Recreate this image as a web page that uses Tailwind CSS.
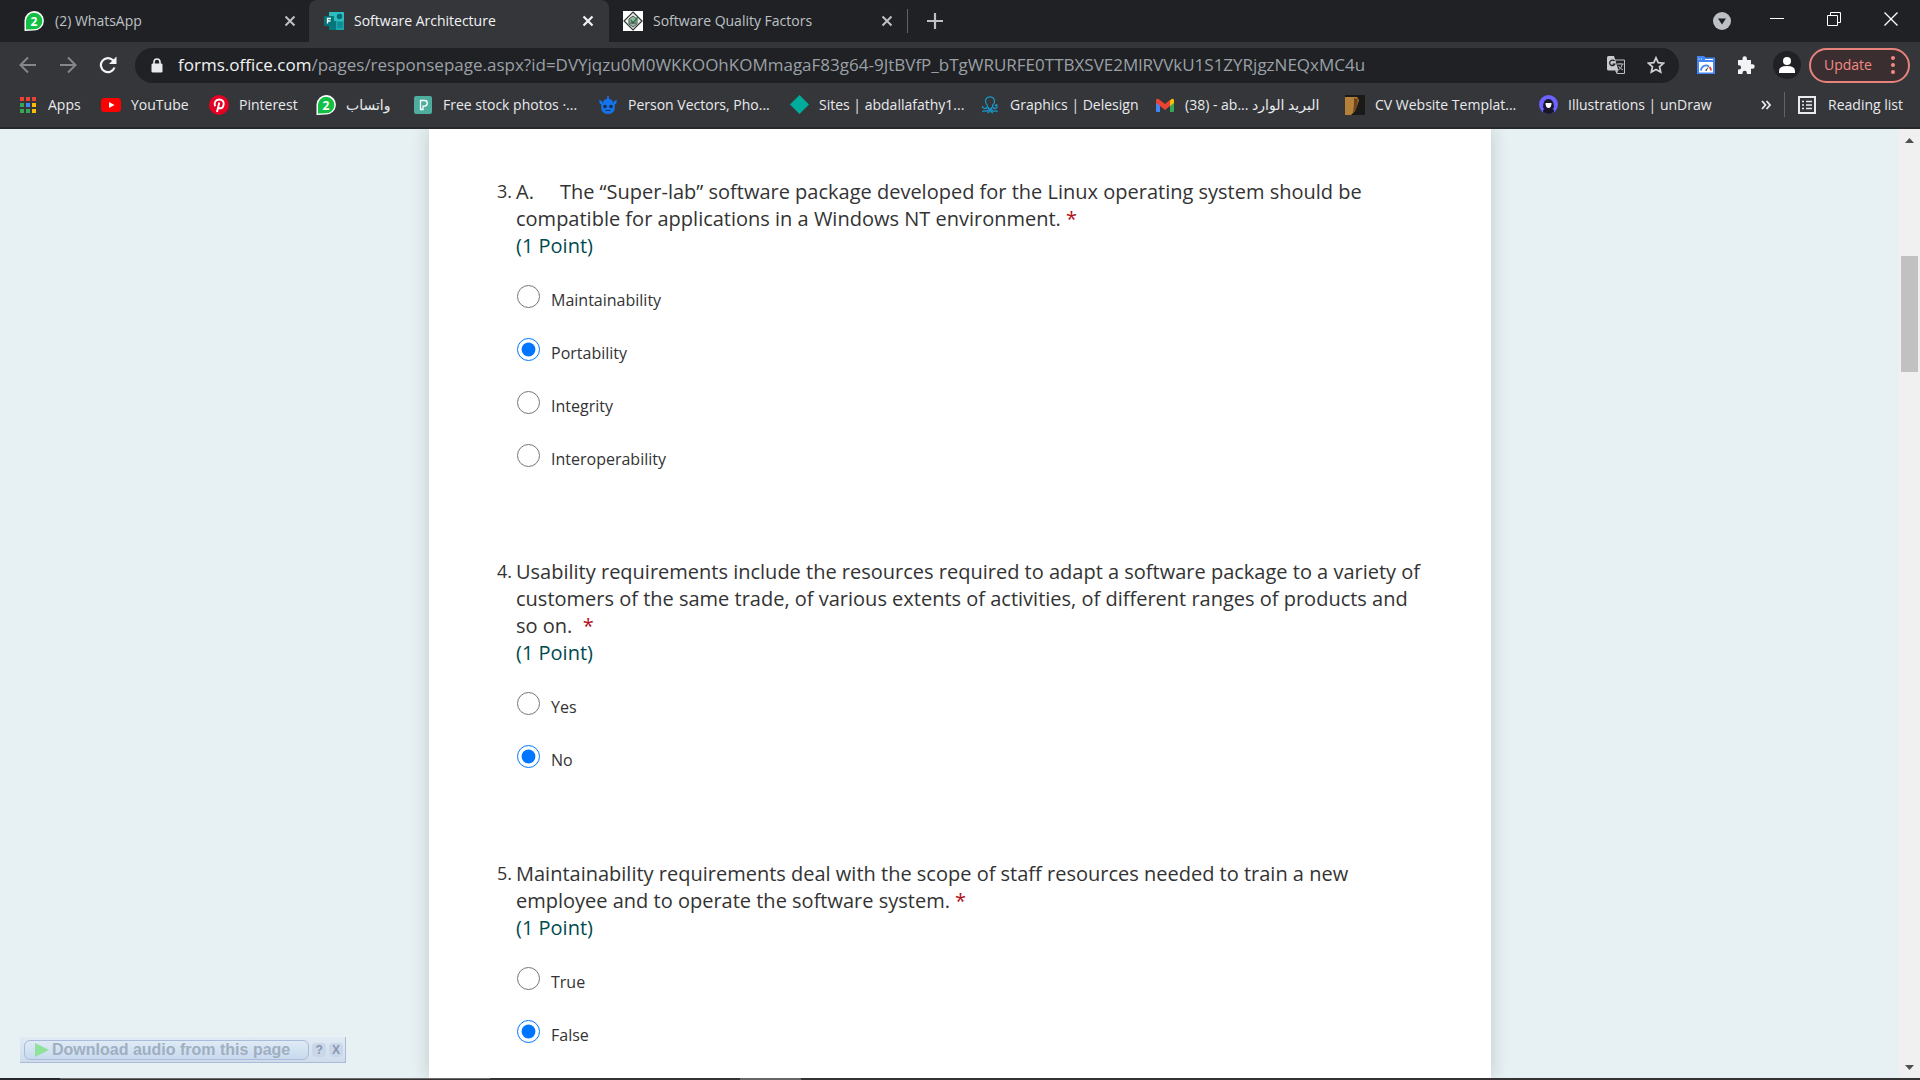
<!DOCTYPE html>
<html lang="en">
<head>
<meta charset="utf-8">
<title>Software Architecture</title>
<script src="https://cdn.jsdelivr.net/npm/@tailwindcss/browser@4"></script>
</head>
<body class="h-screen flex flex-col overflow-hidden bg-[#e7f0f3] font-['Open_Sans','DejaVu_Sans',sans-serif] text-sm text-[#e8eaed]">

<!-- Tab strip -->
<header class="shrink-0 bg-[#35363a]">
  <div class="flex h-[42px] items-stretch bg-[#202124]">
    <div class="flex w-[309px] items-center rounded-br-lg pl-6 pr-[13px] text-[#bdc1c6]">
      <svg class="size-5 shrink-0" viewBox="0 0 20 20"><path d="M.5 20V9.500A9.700 9.700 0 1 1 10 19.500Z" fill="#fff"/><path d="M2 18.500V10A8.200 8.200 0 1 1 10 18.200Z" fill="#12c143"/><text x="10" y="14.500" text-anchor="middle" font-size="12" font-weight="700" fill="#fff">2</text></svg>
      <span class="ml-[11px] flex-1 whitespace-nowrap">(2) WhatsApp</span>
      <button aria-label="Close tab" class="size-3"><svg viewBox="0 0 12 12" class="size-3" stroke="currentColor" stroke-width="2"><path d="M1.500 1.500l9 9M10.500 1.500l-9 9"/></svg></button>
    </div>
    <div class="flex w-[300px] items-center rounded-t-lg bg-[#35363a] pl-[15px] pr-[15px] text-[#f1f3f4]">
      <svg class="size-5 shrink-0" viewBox="0 0 20 20"><rect x="5" y="1" width="15" height="9" fill="#2bbcc0"/><rect x="5" y="10" width="8" height="9" fill="#06777c"/><rect x="12" y="10" width="8" height="9" fill="#1ba5a9"/><rect x="13.500" y="11" width="5" height="6" fill="#0c8e92"/><circle cx="15.500" cy="5.500" r="2.700" fill="#036c70"/><rect x="0" y="5" width="10" height="10" rx="1" fill="#037478"/><path d="M3.500 12.500v-5h3.500M3.500 10h3" stroke="#fff" stroke-width="1.300" fill="none"/></svg>
      <span class="ml-[10px] flex-1 whitespace-nowrap">Software Architecture</span>
      <button aria-label="Close tab" class="size-3"><svg viewBox="0 0 12 12" class="size-3" stroke="currentColor" stroke-width="2.200"><path d="M1.500 1.500l9 9M10.500 1.500l-9 9"/></svg></button>
    </div>
    <div class="flex w-[298px] items-center pl-[14px] pr-[14px] text-[#bdc1c6]">
      <svg class="size-5 shrink-0" viewBox="0 0 20 20"><rect width="20" height="20" fill="#fff"/><path d="M10 1l9 9-9 9-9-9z" fill="#e8ece8" stroke="#333" stroke-width="1.200"/><path d="M6 8l4-3 4 3v5l-4 3-4-3z" fill="#9db5a4" stroke="#3d5a48"/><path d="M8 9l2 3 5-6" stroke="#277a45" stroke-width="1.500" fill="none"/><path d="M7 12h6" stroke="#444"/></svg>
      <span class="ml-[10px] flex-1 whitespace-nowrap">Software Quality Factors</span>
      <button aria-label="Close tab" class="size-3"><svg viewBox="0 0 12 12" class="size-3" stroke="currentColor" stroke-width="2"><path d="M1.500 1.500l9 9M10.500 1.500l-9 9"/></svg></button>
    </div>
    <div class="my-[9px] w-px bg-[#5f6368]"></div>
    <button aria-label="New tab" class="ml-[19px] self-center text-[#bdc1c6]"><svg viewBox="0 0 16 16" class="size-4" stroke="currentColor" stroke-width="2.200"><path d="M8 0v16M0 8h16"/></svg></button>
    <div class="ml-auto flex items-center pr-[22px]">
      <button aria-label="Search tabs" class="mr-[39px]"><svg class="size-[18px]" viewBox="0 0 18 18"><circle cx="9" cy="9" r="9" fill="#bdc1c6"/><path d="M5 6.500h8l-4 6z" fill="#202124"/></svg></button>
      <div class="flex items-center gap-[43px] pb-[5px] text-white">
        <button aria-label="Minimize"><svg class="size-[14px]" viewBox="0 0 14 14" stroke="currentColor"><path d="M0 6.500h14"/></svg></button>
        <button aria-label="Restore"><svg class="size-[14px]" viewBox="0 0 14 14" fill="none" stroke="currentColor"><path d="M.5 3.500h10v10H.5zM3.500 3.500v-3h10v10h-3"/></svg></button>
        <button aria-label="Close"><svg class="size-[14px]" viewBox="0 0 14 14" stroke="currentColor" stroke-width="1.300"><path d="M.5 .5l13 13M13.500 .5l-13 13"/></svg></button>
      </div>
    </div>
  </div>

  <!-- Address bar -->
  <div class="flex h-[46px] items-center pl-[19px] pr-[10px]">
    <button aria-label="Back" class="text-[#85878a]"><svg class="size-[18px]" viewBox="0 0 18 18" fill="none" stroke="currentColor" stroke-width="2"><path d="M17 9H2M9 1.500L1.500 9 9 16.500"/></svg></button>
    <button aria-label="Forward" class="ml-[22px] text-[#85878a]"><svg class="size-[18px]" viewBox="0 0 18 18" fill="none" stroke="currentColor" stroke-width="2"><path d="M1 9h15M9 1.500L16.500 9 9 16.500"/></svg></button>
    <button aria-label="Reload" class="ml-[22px] text-[#f1f3f4]"><svg class="size-[18px]" viewBox="0 0 18 18" fill="none" stroke="currentColor" stroke-width="2.200"><path d="M15.500 11.500A7 7 0 1 1 14 4.300L16 6.500"/><path d="M17.500 .5v7.500H10z" fill="currentColor" stroke="none"/></svg></button>
    <div class="ml-[18px] flex h-[35px] flex-1 items-center rounded-full bg-[#202124] pl-4 pr-[14px]">
      <svg class="h-[15px] w-3 shrink-0" viewBox="0 0 12 15"><rect x=".5" y="5.500" width="11" height="9" rx="1.300" fill="#e8eaed"/><path d="M3 6V4a3 3 0 0 1 6 0v2" stroke="#e8eaed" stroke-width="1.600" fill="none"/></svg>
      <a href="#" class="ml-[15px] flex-1 whitespace-nowrap text-[17px] text-[#9aa0a6]"><span class="text-[#f1f3f4]">forms.office.com</span>/pages/responsepage.aspx?id=DVYjqzu0M0WKKOOhKOMmagaF83g64-9JtBVfP_bTgWRURFE0TTBXSVE2MlRVVkU1S1ZYRjgzNEQxMC4u</a>
      <button aria-label="Translate" class="shrink-0"><svg class="size-[18px]" viewBox="0 0 18 18"><path d="M7 4h10.500v13.500H10z" fill="none" stroke="#bdc1c6"/><path d="M0 1.500Q0 0 1.500 0H7l4.500 14.500H1.500Q0 14.500 0 13z" fill="#c8cbce"/><path d="M7.500 5.200a2.700 2.700 0 1 0 .3 3H5.500" stroke="#202124" stroke-width="1.300" fill="none"/><path d="M10 8h6.500M13 7v1M15.500 8q-1 4-4 6M11.500 10q2 3 4.500 4" stroke="#bdc1c6" fill="none"/><path d="M8 14.500h3.500L9.500 17.500z" fill="#bdc1c6"/></svg></button>
      <button aria-label="Bookmark this page" class="ml-[22px] shrink-0"><svg class="size-[18px]" viewBox="0 0 18 18" fill="none" stroke="#d0d3d6" stroke-width="1.700"><path d="M9 1.800l2.200 4.900 5.300.5-4 3.600 1.200 5.300L9 13.400l-4.700 2.700 1.200-5.300-4-3.600 5.300-.5z"/></svg></button>
    </div>
    <button aria-label="Page speed" class="ml-[18px]"><svg class="size-[18px]" viewBox="0 0 18 18"><path d="M0 0h7l1.500 1.500H18V18H0z" fill="#4285f4"/><path d="M2 6h14v10.500H2z" fill="#fff"/><path d="M4 14.500a5 5 0 0 1 8-4" stroke="#4285f4" stroke-width="1.800" fill="none"/><path d="M12.500 11q1.500 1.500 1.500 3.500" stroke="#e0443a" stroke-width="1.800" fill="none"/><path d="M8 14.500l4-4.500-2.500 5z" fill="#444"/><path d="M1.500 3h1M4 3h1M8 3.500h8" stroke="#fff"/></svg></button>
    <button aria-label="Extensions" class="ml-[22px]"><svg class="size-[18px]" viewBox="0 0 18 18"><path d="M1 4h4.500V2.500a2.200 2.200 0 0 1 4.400 0V4H14v4.300h1.500a2.200 2.200 0 0 1 0 4.400H14V18H9.900v-1a2.200 2.200 0 0 0-4.400 0v1H1v-4.500h1a2.100 2.100 0 0 0 0-4.200H1z" fill="#f1f3f4"/></svg></button>
    <button aria-label="Profile" class="ml-[18px]"><svg class="size-7" viewBox="0 0 28 28"><circle cx="14" cy="14" r="14" fill="#202124"/><circle cx="14" cy="10" r="4" fill="#fff"/><path d="M6 22v-2q0-5 8-5t8 5v2z" fill="#fff"/></svg></button>
    <button class="ml-2 flex h-[35px] w-[101px] items-center rounded-full border-2 border-[#e8837c] bg-[#3b2e31] pl-[13px] pr-[13px] text-[#f28b82]">
      <span class="flex-1 text-left">Update</span>
      <svg class="h-5 w-1" viewBox="0 0 4 20" fill="currentColor"><circle cx="2" cy="3" r="2"/><circle cx="2" cy="10" r="2"/><circle cx="2" cy="17" r="2"/></svg>
    </button>
  </div>

  <!-- Bookmarks -->
  <nav class="flex h-[41px] items-center whitespace-nowrap border-b-2 border-[#27282b] pb-[6px] pl-[19px] pr-[17px]">
    <a href="#" class="flex w-[82px] shrink-0 items-center gap-[11px]"><svg class="size-[18px] shrink-0" viewBox="0 0 18 18"><path d="M1 1h4v4H1zM7 1h4v4H7zM13 1h4v4h-4z" fill="#ea4335"/><path d="M1 7h4v4H1zM1 13h4v4H1zM7 13h4v4H7z" fill="#34a853"/><path d="M7 7h4v4H7z" fill="#4285f4"/><path d="M13 7h4v4h-4zM13 13h4v4h-4z" fill="#fbbc05"/></svg>Apps</a>
    <a href="#" class="flex w-[108px] shrink-0 items-center gap-[10px]"><svg class="size-5 shrink-0" viewBox="0 0 20 20"><rect y="3" width="20" height="14" rx="3.500" fill="#f00"/><path d="M8 7l5.500 3L8 13z" fill="#fff"/></svg>YouTube</a>
    <a href="#" class="flex w-[107px] shrink-0 items-center gap-[10px]"><svg class="size-5 shrink-0" viewBox="0 0 20 20"><circle cx="10" cy="10" r="10" fill="#e60023"/><path d="M6.300 11.200C4.500 8 6.500 4.500 10.200 4.500c3 0 4.700 2 4.500 4.300-.2 2.700-1.700 4.500-3.500 4.500-1 0-1.700-.6-1.900-1.200M10.300 7.500L8 17" stroke="#fff" stroke-width="1.900" fill="none"/></svg>Pinterest</a>
    <a href="#" class="flex w-[98px] shrink-0 items-center gap-[10px]"><svg class="size-5 shrink-0" viewBox="0 0 20 20"><path d="M.5 20V9.500A9.700 9.700 0 1 1 10 19.500Z" fill="#fff"/><path d="M2 18.500V10A8.200 8.200 0 1 1 10 18.200Z" fill="#12c143"/><text x="10" y="14.500" text-anchor="middle" font-size="12" font-weight="700" fill="#fff">2</text></svg>واتساب</a>
    <a href="#" class="flex w-[185px] shrink-0 items-center gap-[11px]"><svg class="size-[18px] shrink-0" viewBox="0 0 18 18"><rect width="18" height="18" rx="2" fill="#4dae9e"/><path d="M6.500 13.500v-9h4a2.800 2.800 0 0 1 0 5.600H9v3.400z" fill="none" stroke="#fff" stroke-width="1.300"/></svg>Free stock photos ·...</a>
    <a href="#" class="flex w-[191px] shrink-0 items-center gap-[11px]"><svg class="size-[18px] shrink-0" viewBox="0 0 18 18"><path d="M2 10q0-5 7-5t7 5q0 8-7 8T2 10z" fill="#1273eb"/><path d="M4 6q1-3 5-3.500Q13 3 14 6zM8.200 0h1.600v3.500H8.200zM0 4l3 1v3H1zM18 4l-3 1v3h2z" fill="#1273eb"/><circle cx="6" cy="10.500" r="1.800" fill="#202a44"/><circle cx="12" cy="10.500" r="1.800" fill="#202a44"/><path d="M6.500 14.500h5" stroke="#202a44"/></svg>Person Vectors, Pho...</a>
    <a href="#" class="flex w-[191px] shrink-0 items-center gap-[10px]"><svg class="size-[19px] shrink-0" viewBox="0 0 19 19"><path d="M9.500 0L19 9.500 9.500 19 0 9.500z" fill="#00ac9b"/></svg>Sites | abdallafathy1...</a>
    <a href="#" class="flex w-[175px] shrink-0 items-center gap-[11px]"><svg class="size-[18px] shrink-0" viewBox="0 0 18 18" fill="none" stroke="#1a93c4" stroke-width="1.300"><path d="M6.500 9.500Q4 7 4.500 4.500 5.500 .8 9 .8t4.500 3.700Q14 7 11.500 9.500q0 3 2.500 3 2 0 2-2.500t-2 0M6.500 9.500q0 3-2.500 3-2.500 0-2.500-2.500M7.500 11q.5 5-3 4-2-.5-3 1M10.500 11q-.5 5 3 4 2-.5 3 1M9 12q0 4-2.500 5M9 12q0 4 3 5"/></svg>Graphics | Delesign</a>
    <a href="#" class="flex w-[189px] shrink-0 items-center gap-[11px]"><svg class="size-[18px] shrink-0" viewBox="0 0 18 18"><path d="M0 4h4v12H1q-1 0-1-1z" fill="#4285f4"/><path d="M14 4h4v11q0 1-1 1h-3z" fill="#34a853"/><path d="M14 4.500l1.500-1.500Q18 2 18 4.500V7l-4 3z" fill="#fbbc04"/><path d="M0 7V4.500Q0 2 2.500 3L9 8l5-4v6l-5 4-5-4z" fill="#ea4335"/></svg><span>(38) - ab... البريد الوارد</span></a>
    <a href="#" class="flex w-[194px] shrink-0 items-center gap-[10px]"><svg class="size-5 shrink-0" viewBox="0 0 20 20"><rect width="20" height="20" fill="#1c1a19"/><path d="M0 2h12l2 3-2 6-2 5-4 4H0z" fill="#b5803a"/><path d="M9 3l4 1-1 8-4 6 1-8z" fill="#6b431d"/></svg>CV Website Templat...</a>
    <a href="#" class="flex shrink-0 items-center gap-[10px]"><svg class="size-[19px] shrink-0" viewBox="0 0 19 19"><circle cx="9.500" cy="9.500" r="9.500" fill="#6c63ff"/><path d="M4 13q0-9 5.500-9T15 13z" fill="#17162b"/><path d="M4 17q0-5 5.500-5t5.500 5q-5 4-11 0z" fill="#17162b"/><path d="M6.500 8h6q0 5-3 5t-3-5z" fill="#fff"/></svg>Illustrations | unDraw</a>
    <button aria-label="More bookmarks" class="ml-auto"><svg class="size-[10px]" viewBox="0 0 10 10" fill="none" stroke="currentColor" stroke-width="1.800"><path d="M1 1l3.500 4L1 9M5.500 1L9 5 5.500 9"/></svg></button>
    <div class="ml-[13px] h-[25px] w-px bg-[#5f6368]"></div>
    <button class="ml-[13px] flex items-center gap-3"><svg class="size-[18px]" viewBox="0 0 18 18" fill="none" stroke="#e8eaed" stroke-width="2"><path d="M1 1h16v16H1z"/><path d="M4 5.500h2M4 9h2M4 12.500h2M8 5.500h6M8 9h6M8 12.500h6" stroke-width="1.600"/></svg>Reading list</button>
  </nav>
</header>

<!-- Form page -->
<div class="flex min-h-0 flex-1 text-[#333]">
  <main class="relative min-w-0 flex-1 overflow-hidden pl-[21px]">
    <form class="mx-auto h-full max-w-[1062px] bg-white pl-[68px] pr-[68px] pt-[49px] shadow-[0_0_16px_rgba(60,90,90,0.25)]">
      <fieldset class="mb-[76px]">
        <legend class="flex text-[20px] leading-[27px]"><span class="w-[19px] shrink-0 whitespace-nowrap text-[18px]">3.</span><span>A.<span class="inline-block w-[26px]"></span>The “Super-lab” software package developed for the Linux operating system should be<br>compatible for applications in a Windows NT environment. <span class="text-[#b10e1c]">*</span><br><span class="text-[#004b50]">(1 Point)</span></span></legend>
        <div class="pl-5 pt-[11px] text-[16px]">
          <label class="flex h-[53px] items-center gap-[11px]"><input type="radio" name="q3" class="size-[23px] accent-[#0075ff]"><span class="pt-[7px]">Maintainability</span></label>
          <label class="flex h-[53px] items-center gap-[11px]"><input type="radio" name="q3" checked class="size-[23px] accent-[#0075ff]"><span class="pt-[7px]">Portability</span></label>
          <label class="flex h-[53px] items-center gap-[11px]"><input type="radio" name="q3" class="size-[23px] accent-[#0075ff]"><span class="pt-[7px]">Integrity</span></label>
          <label class="flex h-[53px] items-center gap-[11px]"><input type="radio" name="q3" class="size-[23px] accent-[#0075ff]"><span class="pt-[7px]">Interoperability</span></label>
        </div>
      </fieldset>
      <fieldset class="mb-[77px]">
        <legend class="flex text-[20px] leading-[27px]"><span class="w-[19px] shrink-0 whitespace-nowrap text-[18px]">4.</span><span>Usability requirements include the resources required to adapt a software package to a variety of<br>customers of the same trade, of various extents of activities, of different ranges of products and<br>so on.&nbsp; <span class="text-[#b10e1c]">*</span><br><span class="text-[#004b50]">(1 Point)</span></span></legend>
        <div class="pl-5 pt-[11px] text-[16px]">
          <label class="flex h-[53px] items-center gap-[11px]"><input type="radio" name="q4" class="size-[23px] accent-[#0075ff]"><span class="pt-[7px]">Yes</span></label>
          <label class="flex h-[53px] items-center gap-[11px]"><input type="radio" name="q4" checked class="size-[23px] accent-[#0075ff]"><span class="pt-[7px]">No</span></label>
        </div>
      </fieldset>
      <fieldset>
        <legend class="flex text-[20px] leading-[27px]"><span class="w-[19px] shrink-0 whitespace-nowrap text-[18px]">5.</span><span>Maintainability requirements deal with the scope of staff resources needed to train a new<br>employee and to operate the software system. <span class="text-[#b10e1c]">*</span><br><span class="text-[#004b50]">(1 Point)</span></span></legend>
        <div class="pl-5 pt-[11px] text-[16px]">
          <label class="flex h-[53px] items-center gap-[11px]"><input type="radio" name="q5" class="size-[23px] accent-[#0075ff]"><span class="pt-[7px]">True</span></label>
          <label class="flex h-[53px] items-center gap-[11px]"><input type="radio" name="q5" checked class="size-[23px] accent-[#0075ff]"><span class="pt-[7px]">False</span></label>
        </div>
      </fieldset>
    </form>

    <!-- Floating download bar -->
    <div class="absolute bottom-[15px] left-5 flex h-[26px] w-[326px] items-center border-b border-r border-[#a9bbd6] bg-linear-to-b from-[#e0ebf4] to-[#cfdcec] pl-1 pr-[2px] font-['Liberation_Sans',sans-serif] font-bold text-[#a0aec2]">
      <button class="flex h-5 w-[286px] items-center whitespace-nowrap rounded-md border border-[#a9bbd9] bg-linear-to-b from-[#dfebf5] to-[#c8daee] pl-[10px] text-base"><svg class="mr-[3px] h-[14px] w-[14px] shrink-0" viewBox="0 0 14 14"><path d="M0 0l14 7-14 7z" fill="#8ee29b"/></svg>Download audio from this page</button>
      <button aria-label="Help" class="ml-[3px] size-[14px] rounded bg-[#c9d7e9] text-xs leading-[14px] text-[#8796b0]">?</button>
      <button aria-label="Close bar" class="ml-[3px] size-[14px] rounded bg-[#c9d7e9] text-xs leading-[14px] text-[#8796b0]">X</button>
    </div>
  </main>

  <!-- Scrollbar -->
  <div class="flex w-[21px] shrink-0 flex-col items-center bg-[#f0f0f0] pb-2 pt-[9px]">
    <svg class="h-[5px] w-[9px] shrink-0" viewBox="0 0 9 5"><path d="M4.500 0L9 5H0z" fill="#505050"/></svg>
    <div class="mt-[113px] h-[116px] w-[17px] bg-[#c1c1c1]"></div>
    <svg class="mt-auto h-[5px] w-[9px] shrink-0" viewBox="0 0 9 5"><path d="M4.500 5L0 0h9z" fill="#505050"/></svg>
  </div>
</div>

<!-- Taskbar edge -->
<footer class="flex h-[2px] shrink-0 bg-[#343233]">
  <div class="w-[60px] bg-[#27282b]"></div>
  <div class="w-[430px] border-t border-[#6a6a6a]"></div>
  <div class="ml-[250px] w-[61px] bg-[#666]"></div>
</footer>
</body>
</html>
